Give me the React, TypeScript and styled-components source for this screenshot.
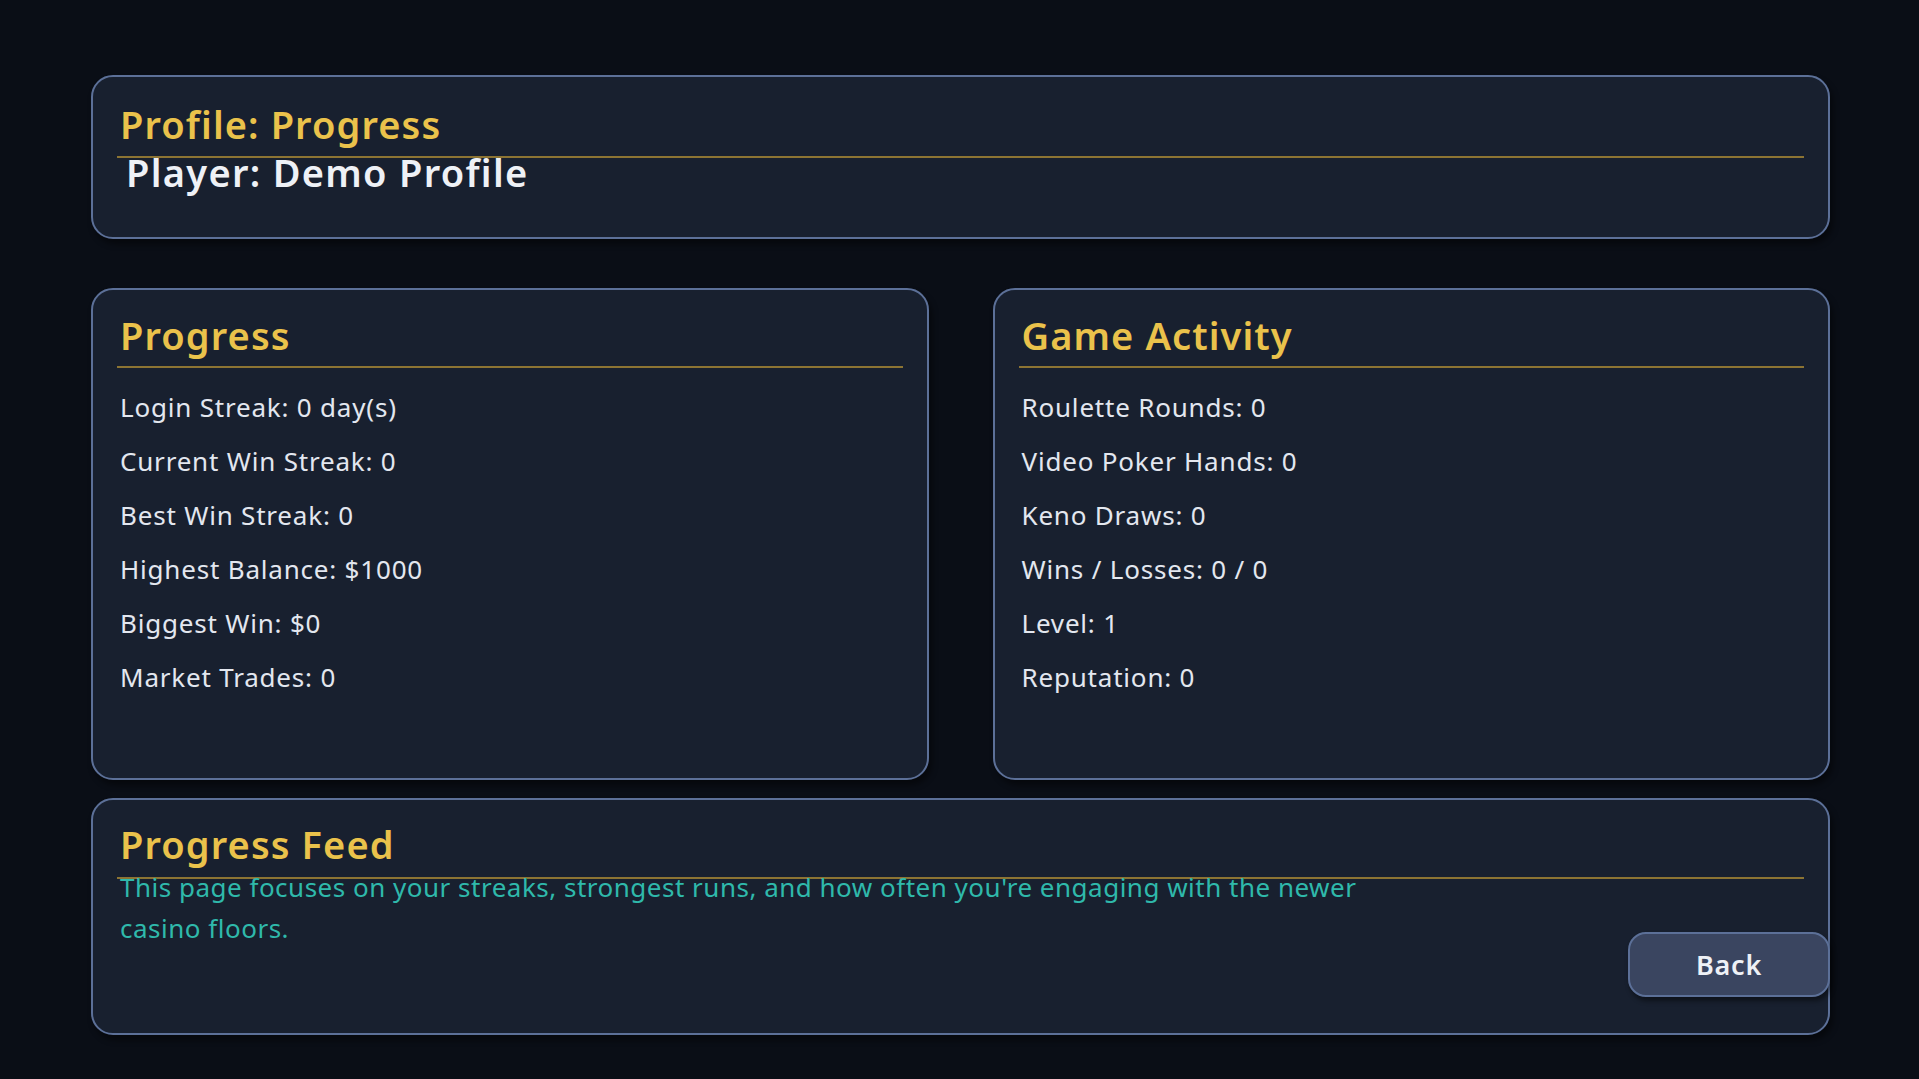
import React from "react";
import styled, { createGlobalStyle } from "styled-components";

const GlobalStyle = createGlobalStyle`
  html, body {
    margin: 0;
    padding: 0;
    background: #0a0e16;
  }
  body {
    font-family: "Noto Sans", "DejaVu Sans", sans-serif;
    color: #e3e7ef;
  }
  #root {
    min-height: 100vh;
  }
`;

const Page = styled.div`
  box-sizing: border-box;
  min-height: 100vh;
  padding: 75px 89px 0 91px;
  display: flex;
  flex-direction: column;
`;

const Card = styled.section<{ $height: number }>`
  box-sizing: border-box;
  height: ${(p) => p.$height}px;
  background: #18202f;
  border: 2px solid #5c7098;
  border-radius: 22px;
  box-shadow: 3px 5px 6px rgba(0, 0, 0, 0.45);
  padding: 0 24px;
  display: flex;
  flex-direction: column;
`;

const CardTitle = styled.h2<{ $pt: number; $pb: number }>`
  margin: 0;
  padding: ${(p) => p.$pt}px 0 ${(p) => p.$pb}px 3px;
  font-size: 38px;
  line-height: 46px;
  font-weight: 600;
  letter-spacing: 1.1px;
  color: #eac24b;
  border-bottom: 2px solid #8c7433;
`;

const PlayerName = styled.div`
  margin: -6px 0 0 9px;
  font-size: 38px;
  line-height: 40px;
  font-weight: 600;
  letter-spacing: 1.3px;
  color: #eef1f6;
`;

const CardRow = styled.div`
  display: grid;
  grid-template-columns: 1fr 1fr;
  gap: 64px;
  margin-top: 49px;
`;

const StatList = styled.ul`
  list-style: none;
  margin: 0;
  padding: 12px 0 0 3px;
`;

const StatItem = styled.li`
  font-size: 26px;
  line-height: 54px;
  letter-spacing: 0.8px;
  color: #e3e7ef;
`;

const FeedWrap = styled.div`
  margin-top: 18px;
`;

const FeedBody = styled.div`
  flex: 1;
  display: flex;
  justify-content: space-between;
  align-items: flex-end;
  padding-bottom: 36px;
`;

const FeedText = styled.p`
  align-self: flex-start;
  margin: -12px 0 0 3px;
  max-width: 1260px;
  font-size: 26px;
  line-height: 41px;
  letter-spacing: 0.5px;
  color: #2fb9ab;
`;

const BackButton = styled.button`
  box-sizing: border-box;
  width: 202px;
  height: 65px;
  margin-right: -26px;
  flex-shrink: 0;
  background: #3a4560;
  border: 2px solid #5c7098;
  border-radius: 18px;
  box-shadow: 2px 4px 5px rgba(0, 0, 0, 0.45);
  font-family: "Noto Sans", "DejaVu Sans", sans-serif;
  font-size: 27px;
  font-weight: 600;
  letter-spacing: 0.8px;
  color: #eef1f6;
  cursor: pointer;
`;

const progress = [
  "Login Streak: 0 day(s)",
  "Current Win Streak: 0",
  "Best Win Streak: 0",
  "Highest Balance: $1000",
  "Biggest Win: $0",
  "Market Trades: 0",
];

const activity = [
  "Roulette Rounds: 0",
  "Video Poker Hands: 0",
  "Keno Draws: 0",
  "Wins / Losses: 0 / 0",
  "Level: 1",
  "Reputation: 0",
];

export default function App() {
  return (
    <>
      <GlobalStyle />
      <Page>
        <Card $height={164}>
          <CardTitle $pt={24} $pb={9}>Profile: Progress</CardTitle>
          <PlayerName>Player: Demo Profile</PlayerName>
        </Card>
        <CardRow>
          <Card $height={492}>
            <CardTitle $pt={22} $pb={8}>Progress</CardTitle>
            <StatList>
              {progress.map((s) => (
                <StatItem key={s}>{s}</StatItem>
              ))}
            </StatList>
          </Card>
          <Card $height={492}>
            <CardTitle $pt={22} $pb={8}>Game Activity</CardTitle>
            <StatList>
              {activity.map((s) => (
                <StatItem key={s}>{s}</StatItem>
              ))}
            </StatList>
          </Card>
        </CardRow>
        <FeedWrap>
          <Card $height={237}>
            <CardTitle $pt={21} $pb={10}>Progress Feed</CardTitle>
            <FeedBody>
              <FeedText>
                This page focuses on your streaks, strongest runs, and how often you're engaging with the newer casino floors.
              </FeedText>
              <BackButton>Back</BackButton>
            </FeedBody>
          </Card>
        </FeedWrap>
      </Page>
    </>
  );
}
